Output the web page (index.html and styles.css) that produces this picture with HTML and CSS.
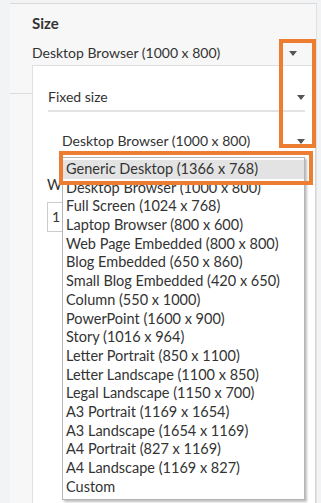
FILE: index.html
```html
<!DOCTYPE html>
<html lang="en">
<head>
    <meta charset="UTF-8">
    <meta name="viewport" content="width=device-width, initial-scale=1.0">
    <title>Size</title>
    <link rel="stylesheet" href="styles.css">
</head>
<body>
    <div class="panel">
        <h2 class="title">Size</h2>
        <div class="select-row top-select">
            <span>Desktop Browser (1000 x 800)</span>
            <span class="caret"></span>
        </div>

        <div class="size-body">
            <div class="gutter"></div>
            <div class="sub">
                <div class="select-row fixed">
                    <span>Fixed size</span>
                    <span class="caret"></span>
                </div>
                <div class="select-row preset">
                    <span>Desktop Browser (1000 x 800)</span>
                    <span class="caret"></span>
                </div>
                <div class="field">
                    <label>W</label>
                    <div class="num-input">1</div>
                </div>

                <ul class="options">
                    <li class="active">Generic Desktop (1366 x 768)</li>
                    <li>Desktop Browser (1000 x 800)</li>
                    <li>Full Screen (1024 x 768)</li>
                    <li>Laptop Browser (800 x 600)</li>
                    <li>Web Page Embedded (800 x 800)</li>
                    <li>Blog Embedded (650 x 860)</li>
                    <li>Small Blog Embedded (420 x 650)</li>
                    <li>Column (550 x 1000)</li>
                    <li>PowerPoint (1600 x 900)</li>
                    <li>Story (1016 x 964)</li>
                    <li>Letter Portrait (850 x 1100)</li>
                    <li>Letter Landscape (1100 x 850)</li>
                    <li>Legal Landscape (1150 x 700)</li>
                    <li>A3 Portrait (1169 x 1654)</li>
                    <li>A3 Landscape (1654 x 1169)</li>
                    <li>A4 Portrait (827 x 1169)</li>
                    <li>A4 Landscape (1169 x 827)</li>
                    <li>Custom</li>
                </ul>
            </div>
        </div>
    </div>

    <div class="mark mark-carets"></div>
    <div class="mark mark-item"></div>
</body>
</html>
```

FILE: styles.css
```css
body {
    margin: 0;
    background: #f2f3f5;
    font-family: Lato, "Open Sans", sans-serif;
    font-size: 14px;
    color: #333;
    height: 503px;
    overflow: hidden;
}
.panel {
    margin: 3px 0 0 10px;
    width: 306px;
    height: 500px;
    background: #f7f7f7;
    border-top: 1px solid #d9d9d9;
    border-right: 1px solid #e2e2e2;
}
.title {
    margin: 0;
    padding: 10px 0 0 22px;
    font-size: 15px;
    font-weight: bold;
    line-height: 18px;
    color: #333;
}
.select-row {
    display: flex;
    align-items: center;
    justify-content: space-between;
    line-height: 18px;
}
.caret {
    width: 0;
    height: 0;
    border-left: 4px solid transparent;
    border-right: 4px solid transparent;
    border-top: 5px solid #555;
}
.top-select {
    margin: 12px 0 0 22px;
    padding-right: 19px;
    height: 18px;
}
.size-body {
    display: flex;
    margin-top: 3px;
}
.gutter {
    width: 22px;
    height: 28px;
    border-bottom: 1px solid #dcdcdc;
}
.sub {
    position: relative;
    flex: 1;
    height: 440px;
    background: #fff;
    border-top: 1px solid #e0e0e0;
    border-left: 1px solid #e0e0e0;
    border-right: 1px solid #d6d6d6;
}
.fixed {
    margin: 22px 10px 0 15px;
    padding-bottom: 4px;
    border-bottom: 2px solid #e3e3e3;
}
.preset {
    margin: 20px 10px 0 29px;
}
.field {
    margin: 26px 0 0 14px;
}
.field label {
    display: block;
    font-size: 14.5px;
    line-height: 18px;
}
.num-input {
    margin-top: 8px;
    width: 60px;
    height: 28px;
    line-height: 28px;
    padding-left: 4px;
    border: 1px solid #ccc;
    background: #fff;
}
.options {
    position: absolute;
    left: 29px;
    top: 91px;
    width: 241px;
    margin: 0;
    padding: 2px 0 3px;
    list-style: none;
    background: #fff;
    border: 1px solid #b5b5b5;
    box-shadow: 2px 2px 2px rgba(0,0,0,0.25);
    font-size: 14.5px;
}
.options li {
    height: 18.7px;
    line-height: 18.7px;
    padding-left: 3px;
    white-space: nowrap;
}
.options li.active {
    background: #e3e3e3;
}
.mark {
    position: absolute;
    border: 4px solid #ed7d31;
}
.mark-carets {
    left: 279px;
    top: 39px;
    width: 29px;
    height: 101px;
}
.mark-item {
    left: 59px;
    top: 151px;
    width: 246px;
    height: 26px;
}
```
